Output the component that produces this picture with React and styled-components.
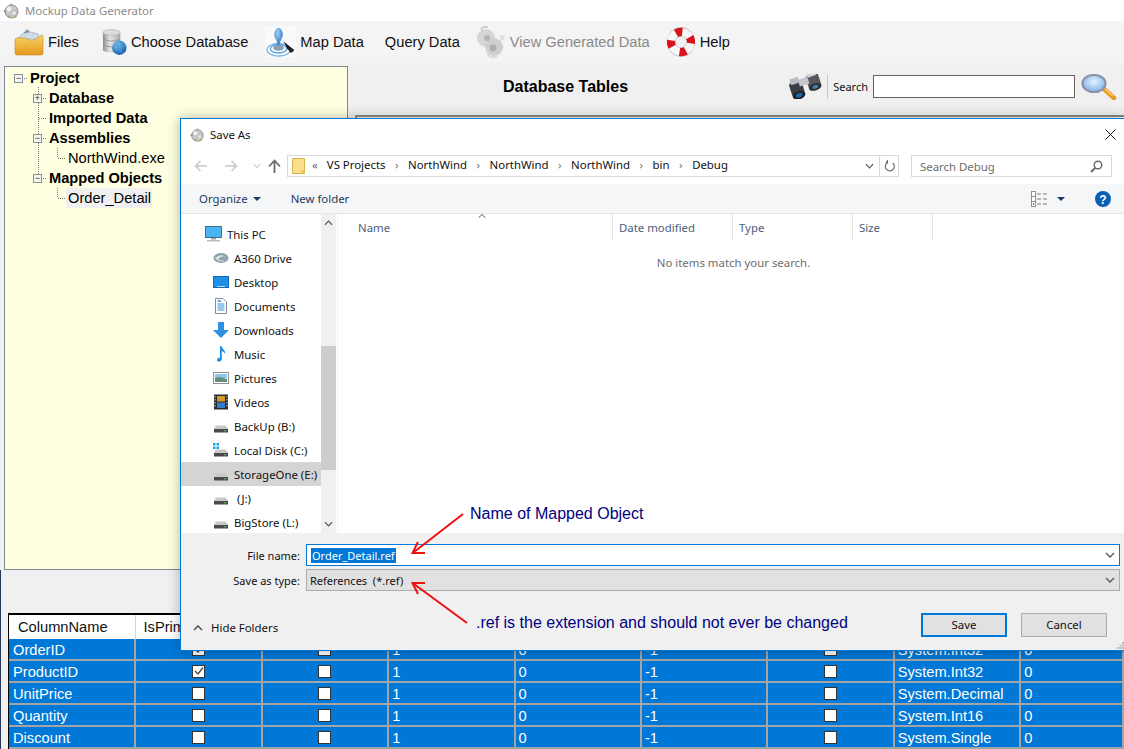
import styled, { createGlobalStyle } from "styled-components";

const GlobalStyle = createGlobalStyle`
  html, body {
    margin: 0;
    padding: 0;
    background: #f0f0f0;
  }
  * {
    box-sizing: border-box;
  }
`;

const AppLogo = ({ size = 18 }) => (
  <svg width={size} height={size} viewBox="0 0 18 18">
    <circle cx="9.5" cy="9.5" r="6.5" fill="#c9c9c9" stroke="#8c8c8c" strokeWidth="1" />
    <circle cx="7" cy="7" r="2.4" fill="#efefef" />
    <circle cx="12" cy="11" r="2.6" fill="#e4e4e4" stroke="#999" strokeWidth="0.5" />
    <path d="M1 9 L4 7.5 L4 10.5 Z" fill="#8c8c8c" />
    <path d="M9 1 L11 3.5 L8 3.5 Z" fill="#a0a0a0" />
    <circle cx="13.5" cy="14.5" r="1.2" fill="#d9a24a" />
    <circle cx="7" cy="14.5" r="1.1" fill="#7fae8a" />
  </svg>
);

const FolderIcon = () => (
  <svg width="30" height="28" viewBox="0 0 30 28">
    <defs>
      <linearGradient id="folderFront" x1="0" y1="0" x2="0" y2="1">
        <stop offset="0" stopColor="#fbd36a" />
        <stop offset="1" stopColor="#e39a1c" />
      </linearGradient>
    </defs>
    <path d="M4 10 L12 3 L24 6 L26 12 Z" fill="#cfdbe6" stroke="#8ba0b4" strokeWidth="0.6" />
    <path d="M9 6 L13 1 L16 4 Z" fill="#7d97ad" />
    <path d="M1 12 Q1 10 3 10 L11 10 L18 13 L28 7 Q29 7 29 9 L29 25 Q29 27 27 27 L3 27 Q1 27 1 25 Z" fill="url(#folderFront)" stroke="#c98b1f" strokeWidth="0.6" />
  </svg>
);

const DatabaseIcon = () => (
  <svg width="25" height="28" viewBox="0 0 26 28">
    <defs>
      <linearGradient id="dbBody" x1="0" y1="0" x2="1" y2="0">
        <stop offset="0" stopColor="#8f8f8f" />
        <stop offset="0.4" stopColor="#e6e6e6" />
        <stop offset="1" stopColor="#a8a8a8" />
      </linearGradient>
      <radialGradient id="dbGlobe" cx="0.35" cy="0.3" r="0.8">
        <stop offset="0" stopColor="#7cc4f5" />
        <stop offset="1" stopColor="#0f4f9c" />
      </radialGradient>
    </defs>
    <path d="M1 4 Q10 -1 19 4 L19 23 Q10 27 1 23 Z" fill="url(#dbBody)" />
    <ellipse cx="10" cy="4" rx="9" ry="3" fill="#dcdcdc" stroke="#a0a0a0" strokeWidth="0.5" />
    <path d="M1 11 Q10 15 19 11 M1 17 Q10 21 19 17" fill="none" stroke="#8a8a8a" strokeWidth="0.8" />
    <circle cx="18" cy="20" r="7.5" fill="url(#dbGlobe)" />
    <path d="M14 16 Q18 18 16 21 Q19 23 21 25 M20 14 Q23 17 25 18" fill="none" stroke="#3e9be0" strokeWidth="1.4" />
  </svg>
);

const MapIcon = () => (
  <svg width="31" height="32" viewBox="0 0 32 32">
    <defs>
      <radialGradient id="mapBall" cx="0.4" cy="0.3" r="0.8">
        <stop offset="0" stopColor="#9fd3f7" />
        <stop offset="1" stopColor="#1c66b5" />
      </radialGradient>
    </defs>
    <rect width="32" height="32" fill="#fafafa" />
    <ellipse cx="14" cy="24" rx="12" ry="6.5" fill="none" stroke="#6eb4e6" strokeWidth="1.2" />
    <ellipse cx="14" cy="23" rx="8.5" ry="4.3" fill="none" stroke="#4a9ad8" strokeWidth="1.2" />
    <ellipse cx="14" cy="22" rx="5" ry="2.4" fill="#9c9c9c" stroke="#4a9ad8" strokeWidth="0.8" />
    <path d="M14 1 C9.5 3 8.5 9 11 13 L14 20 L17 13 C19.5 9 18.5 3 14 1 Z" fill="url(#mapBall)" />
    <path d="M19 15 L30 25 L27 27 L23 23 L22 21 Z" fill="#111" />
    <path d="M22 18 L26 27 L30 24 Z" fill="#222" />
  </svg>
);

const GearsIcon = () => (
  <svg width="31" height="32" viewBox="0 0 31 32">
    <circle cx="11" cy="12" r="9" fill="#d6d6d6" />
    <circle cx="19" cy="21" r="9" fill="#cfcfcf" />
    <circle cx="12" cy="12" r="3" fill="#b4b4b4" />
    <circle cx="18" cy="22" r="3.4" fill="#aeaeae" />
    <path d="M8 6 Q5 1 9 1 L13 1" fill="none" stroke="#cfcfcf" strokeWidth="2" />
    <path d="M25 10 Q29 8 30 11 Q29 14 26 15" fill="#dedede" />
    <path d="M12 24 Q12 30 16 31 L22 31" fill="none" stroke="#dcdcdc" strokeWidth="2" />
  </svg>
);

const LifebuoyIcon = () => (
  <svg width="30" height="32" viewBox="0 0 30 32">
    <ellipse cx="15" cy="16" rx="14" ry="15" fill="#c4c4c4" />
    <circle cx="15" cy="16" r="10" fill="none" stroke="#f8f8f8" strokeWidth="7.5" />
    <circle
      cx="15"
      cy="16"
      r="10"
      fill="none"
      stroke="#d8141c"
      strokeWidth="8.5"
      strokeDasharray="6.5 9.2"
      transform="rotate(-120 15 16)"
    />
    <circle cx="15" cy="16" r="5.6" fill="#f2f2f2" />
  </svg>
);

const BinocularsIcon = () => (
  <svg width="38" height="25" viewBox="0 0 38 25">
    <g transform="rotate(-18 19 12)">
      <rect x="4" y="5" width="13" height="14" rx="2" fill="#3a3d42" />
      <rect x="22" y="3" width="13" height="13" rx="2" fill="#55595f" />
      <rect x="14" y="4" width="10" height="7" fill="#c4c8cc" />
      <rect x="6" y="1" width="9" height="6" rx="1" fill="#b9bdc2" />
      <rect x="24" y="0" width="9" height="5" rx="1" fill="#d3d6d9" />
      <ellipse cx="10.5" cy="19" rx="6.5" ry="4" fill="#1f2226" />
      <ellipse cx="10.5" cy="19" rx="3.4" ry="2.2" fill="#1f63a8" />
      <ellipse cx="28.5" cy="16" rx="6.5" ry="3.5" fill="#2a2d31" />
      <ellipse cx="28.5" cy="16" rx="3" ry="1.8" fill="#4d7fa8" />
    </g>
  </svg>
);

const MagnifierIcon = () => (
  <svg width="37" height="26" viewBox="0 0 37 26">
    <defs>
      <radialGradient id="lens" cx="0.5" cy="0.4" r="0.7">
        <stop offset="0" stopColor="#e6f3fd" />
        <stop offset="1" stopColor="#6fa8e6" />
      </radialGradient>
    </defs>
    <path d="M24 15 L34 24" stroke="#e89a1e" strokeWidth="4.5" strokeLinecap="round" />
    <path d="M24.5 14.5 L33 22" stroke="#ffd36b" strokeWidth="1.4" />
    <ellipse cx="14" cy="9.5" rx="11.5" ry="8.5" fill="url(#lens)" stroke="#8c93a6" strokeWidth="2.2" />
  </svg>
);

const MonitorIcon = () => (
  <svg width="17" height="16" viewBox="0 0 17 16">
    <rect x="0.5" y="0.5" width="16" height="11" fill="#4ab3f2" stroke="#3a6e96" />
    <rect x="6" y="12" width="5" height="1.5" fill="#9aa6b0" />
    <rect x="2" y="14" width="13" height="1.5" fill="#b4bcc4" />
  </svg>
);

const DriveCloudIcon = () => (
  <svg width="16" height="16" viewBox="0 0 16 16">
    <ellipse cx="8" cy="8" rx="7.5" ry="5" fill="#8fa3ad" />
    <path d="M2 8 Q8 3 13 7 Q9 5 5 9 Q8 12 12 10 Q8 14 2 8 Z" fill="#dfe7ea" />
  </svg>
);

const DesktopIcon = () => (
  <svg width="16" height="16" viewBox="0 0 16 16">
    <rect x="0.5" y="2.5" width="15" height="11" fill="#1e90e8" stroke="#1268b3" />
    <rect x="4" y="12" width="8" height="1" fill="#bfe0f8" />
  </svg>
);

const DocumentIcon = () => (
  <svg width="16" height="16" viewBox="0 0 16 16">
    <path d="M2.5 0.5 H10 L13.5 4 V15.5 H2.5 Z" fill="#fff" stroke="#8a8a8a" />
    <path d="M4.5 6 H11.5 M4.5 8 H11.5 M4.5 10 H11.5 M4.5 12 H11.5" stroke="#3b8fd6" />
    <path d="M4.5 3 H8" stroke="#3b8fd6" strokeWidth="1.5" />
  </svg>
);

const DownloadIcon = () => (
  <svg width="16" height="16" viewBox="0 0 16 16">
    <path d="M5 0 H11 V8 H16 L8 16 L0 8 H5 Z" fill="#2f8fe0" />
  </svg>
);

const MusicIcon = () => (
  <svg width="16" height="16" viewBox="0 0 16 16">
    <path d="M7 0 H8.5 C8.8 3 13 4 12 8 C11.5 6.5 10 5.5 8.8 5.3 V13 C8.8 15 6.8 16 5 15.6 C3.5 15.2 3.6 13 5 12.2 C5.8 11.7 6.5 11.7 7 12 Z" fill="#1e90e8" />
  </svg>
);

const PictureIcon = () => (
  <svg width="16" height="16" viewBox="0 0 16 16">
    <rect x="0.5" y="2.5" width="15" height="11" fill="#fff" stroke="#8f8f8f" />
    <rect x="2" y="4" width="12" height="4" fill="#8dc4ea" />
    <path d="M2 8 Q7 6 14 9 V12 H2 Z" fill="#5f8f7a" />
  </svg>
);

const VideoIcon = () => (
  <svg width="16" height="16" viewBox="0 0 16 16">
    <rect x="1" y="0.5" width="14" height="15" fill="#2a2a2a" />
    <rect x="4" y="2" width="8" height="5.5" fill="#d69a2c" />
    <rect x="4" y="8.5" width="8" height="5.5" fill="#2f7fd0" />
    <path d="M2 2 V14 M14 2 V14" stroke="#ddd" strokeWidth="1" strokeDasharray="1.5 1.5" />
  </svg>
);

const DiskIcon = ({ $windows }) => (
  <svg width="16" height="16" viewBox="0 0 16 16">
    {$windows && <path d="M0 1 H2.5 V3.5 H0 Z M3.5 1 H6 V3.5 H3.5 Z M0 4.5 H2.5 V7 H0 Z M3.5 4.5 H6 V7 H3.5 Z" fill="#19a6e8" />}
    <path d="M3 7.5 H13 L15 11 H1 Z" fill="#c9c9c9" />
    <rect x="1" y="11" width="14" height="3.5" fill="#4a4a4a" />
    <rect x="11.5" y="12" width="1.5" height="1.4" fill="#3fdc5a" />
  </svg>
);

const SmallFolder = () => (
  <svg width="13" height="16" viewBox="0 0 13 16">
    <path d="M0.5 0.5 H12.5 V15.5 H0.5 Z" fill="#fbdf8c" stroke="#d9b24a" />
    <path d="M9.5 12 H12.5 V15.5 H9.5 Z" fill="#f2c94c" />
  </svg>
);

const Chevron = ({ $up, color = "#555", w = 10 }) => (
  <svg width={w} height="6" viewBox="0 0 10 6">
    <path d={$up ? "M1 5 L5 1 L9 5" : "M1 1 L5 5 L9 1"} fill="none" stroke={color} strokeWidth="1.3" />
  </svg>
);

const Caret = () => (
  <svg width="8" height="4" viewBox="0 0 8 4">
    <path d="M0 0 H8 L4 4 Z" fill="#1b3a63" />
  </svg>
);

const NavArrow = ({ dir, color }) => (
  <svg width="14" height="12" viewBox="0 0 14 12">
    <path
      d={dir === "left" ? "M13 6 H2 M6.5 1 L1.5 6 L6.5 11" : "M1 6 H12 M7.5 1 L12.5 6 L7.5 11"}
      fill="none"
      stroke={color}
      strokeWidth="1.5"
    />
  </svg>
);

const UpArrow = () => (
  <svg width="13" height="14" viewBox="0 0 13 14">
    <path d="M6.5 14 V2 M1 7.5 L6.5 1.5 L12 7.5" fill="none" stroke="#6b6b6b" strokeWidth="1.8" />
  </svg>
);

const RefreshIcon = () => (
  <svg width="12" height="14" viewBox="0 0 12 14">
    <path d="M8.8 4 A4.5 4.5 0 1 1 4 3.2" fill="none" stroke="#6f6f6f" strokeWidth="1.2" />
    <path d="M4 0.5 V5 L1.5 3 Z" fill="#6f6f6f" />
  </svg>
);

const SearchGlass = () => (
  <svg width="13" height="13" viewBox="0 0 13 13">
    <circle cx="8" cy="5" r="3.8" fill="none" stroke="#666" strokeWidth="1.4" />
    <path d="M5.2 8 L1 12" stroke="#666" strokeWidth="1.8" />
  </svg>
);

const ViewIcon = () => (
  <svg width="16" height="16" viewBox="0 0 16 16">
    <rect x="0.5" y="0.5" width="4" height="15" fill="#fff" stroke="#8f8f8f" />
    <path d="M0.5 5.5 H4.5 M0.5 10.5 H4.5" stroke="#8f8f8f" />
    <rect x="2" y="12" width="1" height="2" fill="#d33" />
    <path d="M6 3 H10 M12 3 H16 M6 8 H10 M12 8 H16 M6 13 H10 M12 13 H16" stroke="#7f7f7f" />
  </svg>
);

const HelpIcon = () => (
  <svg width="16" height="16" viewBox="0 0 16 16" fontFamily="Liberation Sans">
    <circle cx="8" cy="8" r="8" fill="#0a5fb4" />
    <text x="8" y="12.5" textAnchor="middle" fontSize="12" fontWeight="700" fill="#fff">?</text>
  </svg>
);

const CheckMark = () => (
  <svg width="10" height="10" viewBox="0 0 10 10">
    <path d="M1 5 L4 8 L9 1.5" fill="none" stroke="#444" strokeWidth="1.3" />
  </svg>
);

const CloseIcon = () => (
  <svg width="11" height="11" viewBox="0 0 11 11">
    <path d="M0.5 0.5 L10.5 10.5 M10.5 0.5 L0.5 10.5" stroke="#111" strokeWidth="1" />
  </svg>
);

const navItems = [
  { label: "This PC", Icon: MonitorIcon, top: true },
  { label: "A360 Drive", Icon: DriveCloudIcon },
  { label: "Desktop", Icon: DesktopIcon },
  { label: "Documents", Icon: DocumentIcon },
  { label: "Downloads", Icon: DownloadIcon },
  { label: "Music", Icon: MusicIcon },
  { label: "Pictures", Icon: PictureIcon },
  { label: "Videos", Icon: VideoIcon },
  { label: "BackUp (B:)", Icon: DiskIcon },
  { label: "Local Disk (C:)", Icon: DiskIcon, windows: true },
  { label: "StorageOne (E:)", Icon: DiskIcon, selected: true },
  { label: " (J:)", Icon: DiskIcon },
  { label: "BigStore (L:)", Icon: DiskIcon },
];

const toolItems = [
  { label: "Files", Icon: FolderIcon, gap: 0 },
  { label: "Choose Database", Icon: DatabaseIcon, gap: 23 },
  { label: "Map Data", Icon: MapIcon, gap: 17 },
  { label: "Query Data", gap: 21 },
  { label: "View Generated Data", Icon: GearsIcon, gap: 15, disabled: true },
  { label: "Help", Icon: LifebuoyIcon, gap: 16 },
];

const rows = [
  { name: "OrderID", primary: true, type: "System.Int32" },
  { name: "ProductID", primary: true, type: "System.Int32" },
  { name: "UnitPrice", type: "System.Decimal" },
  { name: "Quantity", type: "System.Int16" },
  { name: "Discount", type: "System.Single" },
];

const crumbs = ["VS Projects", "NorthWind", "NorthWind", "NorthWind", "bin", "Debug"];

function App() {
  return (
    <>
      <GlobalStyle />
      <Page>
        <TitleBar>
          <AppLogo />
          <AppTitle>Mockup Data Generator</AppTitle>
        </TitleBar>

        <Toolbar>
          {toolItems.map(({ label, Icon, gap, disabled }) => (
            <ToolItem key={label} $gap={gap} $disabled={disabled}>
              {Icon && <Icon />}
              <span>{label}</span>
            </ToolItem>
          ))}
        </Toolbar>

        <Workspace>
          <TreePanel>
            <TreeLines width="120" height="140">
              <path d="M34.5 21 V112 M53.5 82 V92 M53.5 122 V132" stroke="#777" strokeDasharray="1 1" fill="none" />
              <path d="M20 12.5 H24 M39 32.5 H43 M35 52.5 H43 M39 72.5 H43 M54 92.5 H62 M39 112.5 H43 M54 132.5 H62" stroke="#777" strokeDasharray="1 1" fill="none" />
            </TreeLines>
            <TreeRow $depth={0} $bold>
              <Expander>−</Expander>
              <TreeLabel>Project</TreeLabel>
            </TreeRow>
            <TreeRow $depth={1} $bold>
              <Expander>+</Expander>
              <TreeLabel>Database</TreeLabel>
            </TreeRow>
            <TreeRow $depth={1} $bold>
              <ExpanderGap />
              <TreeLabel>Imported Data</TreeLabel>
            </TreeRow>
            <TreeRow $depth={1} $bold>
              <Expander>−</Expander>
              <TreeLabel>Assemblies</TreeLabel>
            </TreeRow>
            <TreeRow $depth={2}>
              <ExpanderGap />
              <TreeLabel>NorthWind.exe</TreeLabel>
            </TreeRow>
            <TreeRow $depth={1} $bold>
              <Expander>−</Expander>
              <TreeLabel>Mapped Objects</TreeLabel>
            </TreeRow>
            <TreeRow $depth={2}>
              <ExpanderGap />
              <TreeLabel $selected>Order_Detail</TreeLabel>
            </TreeRow>
          </TreePanel>

          <TablesPane>
            <TablesHeader>
              <TablesTitle>Database Tables</TablesTitle>
              <SearchStrip>
                <BinocularsIcon />
                <SearchLabel>Search</SearchLabel>
                <SearchInput />
                <MagnifierIcon />
              </SearchStrip>
            </TablesHeader>
            <TablesBody />
          </TablesPane>
        </Workspace>

        <GridArea>
          <ColumnsGrid>
            <GridHeader>
              <HeaderCell>ColumnName</HeaderCell>
              <HeaderCell>IsPrim</HeaderCell>
            </GridHeader>
            {rows.map((row) => (
              <GridRow key={row.name}>
                <NameCell>{row.name}</NameCell>
                <CheckCell>
                  <CheckBox>{row.primary && <CheckMark />}</CheckBox>
                </CheckCell>
                <CheckCell>
                  <CheckBox />
                </CheckCell>
                <Cell>1</Cell>
                <Cell>0</Cell>
                <Cell>-1</Cell>
                <CheckCell>
                  <CheckBox />
                </CheckCell>
                <Cell>{row.type}</Cell>
                <Cell>0</Cell>
              </GridRow>
            ))}
          </ColumnsGrid>
        </GridArea>

        <Dialog>
          <DialogTitle>
            <AppLogo size={16} />
            <span>Save As</span>
            <CloseButton>
              <CloseIcon />
            </CloseButton>
          </DialogTitle>

          <NavBar>
            <NavArrow dir="left" color="#c8c8c8" />
            <NavArrow dir="right" color="#c8c8c8" />
            <Chevron color="#c8c8c8" w={8} />
            <UpArrow />
            <AddressBox>
              <SmallFolder />
              <CrumbMore>«</CrumbMore>
              {crumbs.map((crumb, i) => (
                <Crumb key={i} $last={i === crumbs.length - 1}>
                  {crumb}
                </Crumb>
              ))}
              <AddressTools>
                <Chevron w={9} />
                <AddressDivider />
                <RefreshIcon />
              </AddressTools>
            </AddressBox>
            <SearchBox>
              <span>Search Debug</span>
              <SearchGlass />
            </SearchBox>
          </NavBar>

          <CommandBar>
            <CommandButton>
              Organize <Caret />
            </CommandButton>
            <CommandButton>New folder</CommandButton>
            <CommandTools>
              <ViewIcon />
              <Caret />
              <HelpSlot>
                <HelpIcon />
              </HelpSlot>
            </CommandTools>
          </CommandBar>

          <DialogBody>
            <NavPane>
              {navItems.map(({ label, Icon, top, selected, windows }) => (
                <NavRow key={label} $top={top} $selected={selected}>
                  <Icon $windows={windows} />
                  <span>{label}</span>
                </NavRow>
              ))}
            </NavPane>
            <ScrollBar>
              <Chevron $up color="#505050" w={9} />
              <ScrollThumb />
              <ScrollDown>
                <Chevron color="#505050" w={9} />
              </ScrollDown>
            </ScrollBar>
            <ListPane>
              <ListHeader>
                <ColumnHead $w={275}>
                  Name
                  <SortMark>
                    <Chevron $up color="#888" w={8} />
                  </SortMark>
                </ColumnHead>
                <ColumnHead $w={120} $small>Date modified</ColumnHead>
                <ColumnHead $w={120} $small>Type</ColumnHead>
                <ColumnHead $w={80} $small>Size</ColumnHead>
              </ListHeader>
              <EmptyMessage>No items match your search.</EmptyMessage>
            </ListPane>
          </DialogBody>

          <DialogFooter>
            <FieldRow>
              <FieldLabel>File name:</FieldLabel>
              <FieldBox $focused>
                <SelectedText>Order_Detail.ref</SelectedText>
                <Chevron color="#555" />
              </FieldBox>
            </FieldRow>
            <FieldRow>
              <FieldLabel>Save as type:</FieldLabel>
              <FieldBox>
                <span>References&nbsp; (*.ref)</span>
                <Chevron color="#555" />
              </FieldBox>
            </FieldRow>
            <ActionRow>
              <HideFolders>
                <Chevron $up color="#444" w={10} />
                Hide Folders
              </HideFolders>
              <ActionButtons>
                <DialogButton $primary>Save</DialogButton>
                <DialogButton>Cancel</DialogButton>
              </ActionButtons>
            </ActionRow>
            <ResizeGrip width="7" height="7" viewBox="0 0 7 7">
              <path d="M5 0 H7 V2 H5 Z M2.5 2.5 H4.5 V4.5 H2.5 Z M5 2.5 H7 V4.5 H5 Z M0 5 H2 V7 H0 Z M2.5 5 H4.5 V7 H2.5 Z M5 5 H7 V7 H5 Z" fill="#bdbdbd" />
            </ResizeGrip>
          </DialogFooter>
        </Dialog>

        <Annotation $left={470} $top={505}>Name of Mapped Object</Annotation>
        <Annotation $left={476} $top={614}>.ref is the extension and should not ever be changed</Annotation>
        <ArrowLayer width="1124" height="749">
          <g stroke="#f01010" strokeWidth="2" fill="none">
            <path d="M463 514 L414 552" />
            <path d="M425 553 L412.5 553 L418 542" />
            <path d="M467 623 L414 584" />
            <path d="M425 583 L412.5 583 L418 594" />
          </g>
        </ArrowLayer>
      </Page>
    </>
  );
}

export default App;

const Page = styled.div`
  position: relative;
  display: flex;
  flex-direction: column;
  width: 1124px;
  height: 749px;
  overflow: hidden;
  background: #f0f0f0;
  font-family: "Liberation Sans", Arial, sans-serif;
`;

const TitleBar = styled.div`
  display: flex;
  align-items: center;
  gap: 5px;
  height: 21px;
  padding-left: 2px;
  background: #fff;
`;

const AppTitle = styled.span`
  font-family: "Noto Sans", sans-serif;
  font-size: 11.4px;
  color: #8c8c8c;
`;

const Toolbar = styled.div`
  display: flex;
  align-items: center;
  height: 42px;
  padding-left: 14px;
  background: #f4f4f4;
`;

const ToolItem = styled.div`
  display: flex;
  align-items: center;
  gap: 4px;
  margin-left: ${(p) => p.$gap}px;
  font-size: 14.67px;
  color: ${(p) => (p.$disabled ? "#8a8a8a" : "#111")};
`;

const Workspace = styled.div`
  display: flex;
  height: 507px;
`;

const TreePanel = styled.div`
  position: relative;
  width: 344px;
  margin: 3px 0 0 4px;
  padding-top: 1px;
  border: 1px solid #7f8894;
  background: #ffffe1;
`;

const TreeLines = styled.svg`
  position: absolute;
  left: -1px;
  top: -1px;
`;

const TreeRow = styled.div`
  position: relative;
  display: flex;
  align-items: center;
  height: 20px;
  padding-left: ${(p) => 9 + p.$depth * 19}px;
  font-size: 14.67px;
  font-weight: ${(p) => (p.$bold ? 700 : 400)};
  color: #000;
`;

const Expander = styled.span`
  display: flex;
  align-items: center;
  justify-content: center;
  width: 9px;
  height: 9px;
  border: 1px solid #8e8f8f;
  background: #f4f4f4;
  color: #333;
  font-size: 9px;
  font-weight: 400;
  line-height: 1;
`;

const ExpanderGap = styled.span`
  width: 9px;
`;

const TreeLabel = styled.span`
  margin-left: 5px;
  padding: 2px 1px 2px 2px;
  background: ${(p) => (p.$selected ? "#f0f0f0" : "transparent")};
`;

const TablesPane = styled.div`
  display: flex;
  flex-direction: column;
  flex: 1;
  margin-left: 7px;
`;

const TablesHeader = styled.div`
  position: relative;
  display: flex;
  align-items: center;
  height: 52px;
  padding-bottom: 5px;
`;

const TablesTitle = styled.div`
  margin-left: 148px;
  font-size: 16px;
  font-weight: 700;
  color: #000;
`;

const SearchStrip = styled.div`
  display: flex;
  align-items: center;
  margin-left: auto;
  margin-right: 7px;
`;

const SearchLabel = styled.span`
  margin-left: 3px;
  padding-left: 5px;
  border-left: 1px solid #c8c8c8;
  line-height: 24px;
  font-family: "Noto Sans", sans-serif;
  font-size: 11px;
  color: #111;
`;

const SearchInput = styled.div`
  width: 202px;
  height: 23px;
  margin: 0 5px 0 5px;
  border: 1px solid #666;
  background: #fff;
`;

const TablesBody = styled.div`
  flex: 1;
  border-top: 2px solid #8a8a8a;
  border-left: 2px solid #8a8a8a;
  background: #ffffe1;
`;

const GridArea = styled.div`
  flex: 1;
  padding: 43px 0 0 8px;
  box-shadow: inset 1px 0 0 #26365a;
`;

const ColumnsGrid = styled.div`
  border-top: 2px solid #000;
  border-left: 1px solid #000;
`;

const GridHeader = styled.div`
  display: flex;
  height: 24px;
`;

const HeaderCell = styled.div`
  display: flex;
  align-items: center;
  width: 126.5px;
  padding-left: 9px;
  border-right: 1px solid #d8d8d8;
  background: #fff;
  font-size: 14.67px;
  color: #111;
  & + & {
    padding-left: 8px;
  }
`;

const GridRow = styled.div`
  display: grid;
  grid-template-columns: 127.4px repeat(7, 126.4px) 1fr;
  height: 22px;
  padding-top: 2px;
  background: #0078d7;
  border-bottom: 2px solid #a4a4a4;
`;

const Cell = styled.div`
  display: flex;
  align-items: center;
  margin-top: -2px;
  padding: 2px 0 0 3px;
  border-right: 2px solid #a4a4a4;
  font-size: 14.67px;
  color: #fff;
`;

const NameCell = styled(Cell)`
  padding-left: 4px;
`;

const CheckCell = styled(Cell)`
  justify-content: center;
  padding-left: 0;
`;

const CheckBox = styled.div`
  display: flex;
  align-items: center;
  justify-content: center;
  width: 13px;
  height: 13px;
  margin-top: -2px;
  border: 1px solid #333;
  background: #fff;
`;

const Dialog = styled.div`
  position: absolute;
  left: 180px;
  top: 118px;
  right: -1px;
  height: 533px;
  display: flex;
  flex-direction: column;
  border: 1px solid #0078d7;
  border-right: none;
  background: #fff;
  box-shadow: 0 0 12px rgba(0, 0, 0, 0.3);
  font-family: "Noto Sans", sans-serif;
  font-size: 11.4px;
  color: #111;
`;

const DialogTitle = styled.div`
  display: flex;
  align-items: center;
  gap: 5px;
  height: 31px;
  padding-left: 8px;
`;

const CloseButton = styled.span`
  display: flex;
  margin-left: auto;
  margin-right: 9px;
`;

const NavBar = styled.div`
  display: flex;
  align-items: center;
  gap: 16px;
  height: 34px;
  padding: 0 12px 2px 13px;
  svg:nth-child(3) {
    margin: 0 -1px 0 -1px;
  }
  svg:nth-child(4) {
    margin-left: -8px;
  }
`;

const AddressBox = styled.div`
  display: flex;
  flex: none;
  align-items: center;
  width: 612px;
  height: 22px;
  margin-left: -10px;
  padding-left: 4px;
  border: 1px solid #d9d9d9;
`;

const CrumbMore = styled.span`
  margin: -3px 9px 0 7px;
  color: #666;
`;

const Crumb = styled.span`
  margin-top: -3px;
  &::after {
    content: ${(p) => (p.$last ? '""' : '"›"')};
    margin: 0 9.5px;
    color: #777;
  }
`;

const AddressTools = styled.div`
  display: flex;
  align-items: center;
  gap: 5px;
  margin-left: auto;
  padding-right: 3px;
`;

const AddressDivider = styled.span`
  width: 1px;
  height: 20px;
  background: #d9d9d9;
`;

const SearchBox = styled.div`
  display: flex;
  flex: none;
  align-items: center;
  justify-content: space-between;
  width: 201px;
  height: 22px;
  margin-left: -4px;
  padding: 0 8px;
  border: 1px solid #d9d9d9;
  color: #6d6d6d;
`;

const CommandBar = styled.div`
  display: flex;
  align-items: center;
  gap: 30px;
  height: 30px;
  padding-left: 18px;
  background: #f5f6f7;
  border-bottom: 1px solid #e5e5e5;
`;

const CommandButton = styled.span`
  display: flex;
  align-items: center;
  gap: 5px;
  color: #1e395b;
`;

const CommandTools = styled.div`
  display: flex;
  align-items: center;
  gap: 10px;
  margin-left: auto;
  margin-right: 14px;
`;

const HelpSlot = styled.span`
  display: flex;
  margin-left: 20px;
`;

const DialogBody = styled.div`
  display: flex;
  height: 319px;
`;

const NavPane = styled.div`
  width: 140px;
  padding-top: 8px;
  overflow: hidden;
`;

const NavRow = styled.div`
  display: flex;
  align-items: center;
  gap: 5px;
  height: 24px;
  padding-left: ${(p) => (p.$top ? 24 : 32)}px;
  white-space: pre;
  background: ${(p) => (p.$selected ? "#d4d4d4" : "transparent")};
`;

const ScrollBar = styled.div`
  display: flex;
  flex-direction: column;
  align-items: center;
  width: 15px;
  padding-top: 6px;
  background: #f0f0f0;
`;

const ScrollThumb = styled.div`
  width: 15px;
  height: 124px;
  margin-top: 120px;
  background: #cdcdcd;
`;

const ScrollDown = styled.div`
  display: flex;
  margin-top: auto;
  padding-bottom: 6px;
`;

const ListPane = styled.div`
  flex: 1;
  position: relative;
  margin-left: 1px;
  border-left: 1px solid #f2f2f2;
`;

const ListHeader = styled.div`
  display: flex;
  height: 26px;
`;

const ColumnHead = styled.div`
  position: relative;
  display: flex;
  align-items: center;
  width: ${(p) => p.$w}px;
  padding-left: ${(p) => (p.$small ? 6 : 20)}px;
  border-right: 1px solid #e5e5e5;
  color: #4c607a;
`;

const SortMark = styled.span`
  position: absolute;
  left: 140px;
  top: -1px;
  display: flex;
`;

const EmptyMessage = styled.div`
  margin-top: 15px;
  padding-left: 4px;
  text-align: center;
  color: #6d6d6d;
`;

const DialogFooter = styled.div`
  position: relative;
  flex: 1;
  padding-top: 11px;
  background: #f0f0f0;
`;

const FieldRow = styled.div`
  display: flex;
  align-items: center;
  gap: 6px;
  height: 22px;
  margin-bottom: 3px;
  padding-right: 5px;
  font-size: 11px;
`;

const FieldLabel = styled.span`
  width: 119px;
  text-align: right;
`;

const FieldBox = styled.div`
  display: flex;
  align-items: center;
  justify-content: space-between;
  flex: 1;
  height: 22px;
  padding: 0 4px 0 ${(p) => (p.$focused ? 4 : 3)}px;
  border: 1px solid ${(p) => (p.$focused ? "#0078d7" : "#adadad")};
  background: ${(p) => (p.$focused ? "#fff" : "#e1e1e1")};
`;

const SelectedText = styled.span`
  padding: 0 1px;
  line-height: 15px;
  background: #0078d7;
  color: #fff;
`;

const ActionRow = styled.div`
  display: flex;
  align-items: flex-start;
  justify-content: space-between;
  margin-top: 22px;
  padding: 0 18px 0 12px;
`;

const HideFolders = styled.div`
  display: flex;
  align-items: center;
  gap: 8px;
  height: 23px;
  margin-top: 3px;
`;

const ActionButtons = styled.div`
  display: flex;
  gap: 14px;
`;

const DialogButton = styled.div`
  display: flex;
  align-items: center;
  justify-content: center;
  width: 86px;
  height: 24px;
  padding-bottom: 1px;
  border: ${(p) => (p.$primary ? "2px solid #0078d7" : "1px solid #adadad")};
  background: #e1e1e1;
`;

const ResizeGrip = styled.svg`
  position: absolute;
  right: 1px;
  bottom: 1px;
`;

const Annotation = styled.div`
  position: absolute;
  left: ${(p) => p.$left}px;
  top: ${(p) => p.$top}px;
  font-size: 16px;
  line-height: 18px;
  color: #000080;
  white-space: nowrap;
`;

const ArrowLayer = styled.svg`
  position: absolute;
  left: 0;
  top: 0;
  pointer-events: none;
`;
